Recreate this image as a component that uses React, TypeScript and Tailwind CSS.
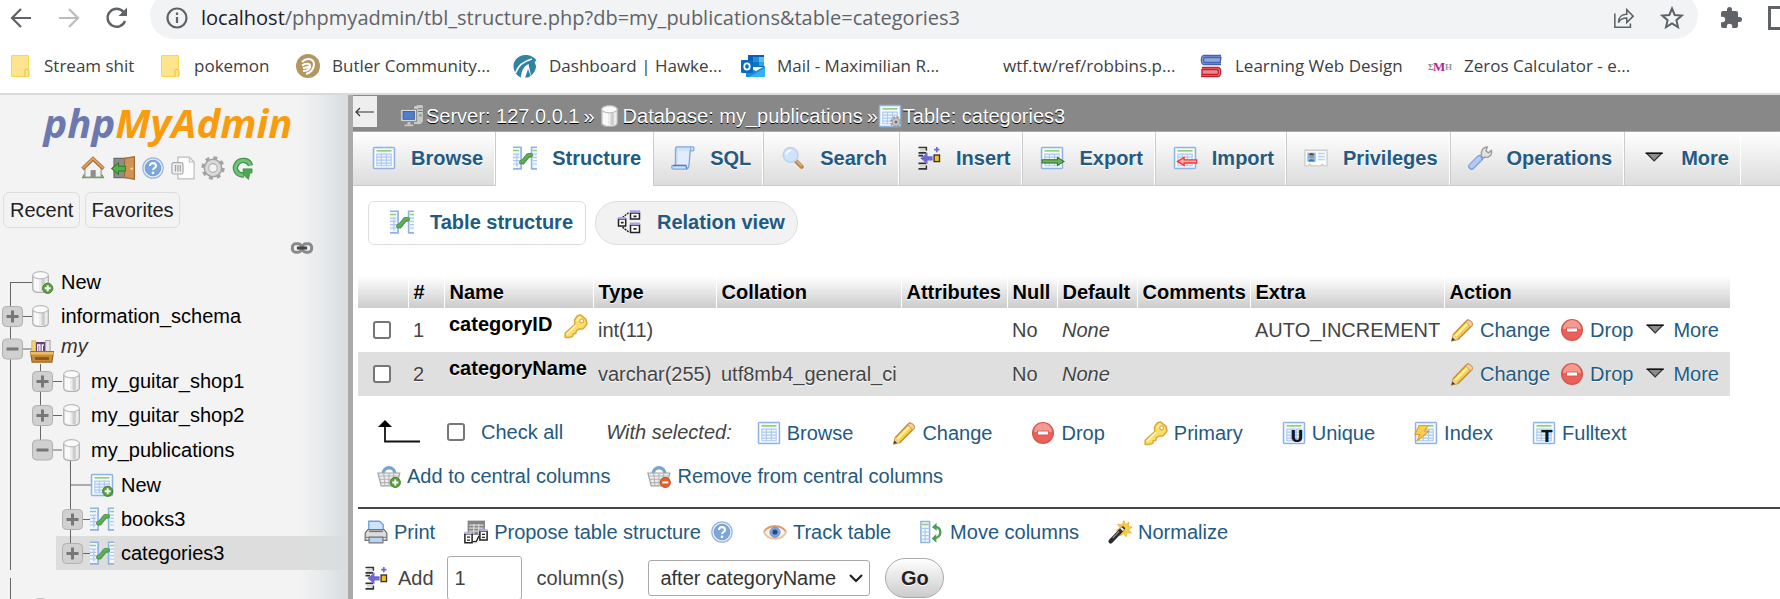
import React from "react";

type IconProps = { className?: string };

function Svg({ children, className = "" }: { children: React.ReactNode; className?: string }) {
  return (
    <svg viewBox="0 0 16 16" className={`size-6 shrink-0 overflow-visible ${className}`} fill="none" aria-hidden="true">
      {children}
    </svg>
  );
}

/* ---------- shared icon parts ---------- */

function Sheet() {
  return (
    <>
      <rect x="1" y="1" width="14" height="14" rx=".6" fill="#fff" stroke="#8fb3e2" />
      <rect x="1.7" y="1.7" width="12.6" height="12.6" stroke="#d5e5f8" strokeWidth=".5" />
      <path d="M3 3.2h10" stroke="#8fd07c" strokeWidth="1.2" />
      <rect x="3" y="5.2" width="10" height="8" fill="#f3f8ff" />
      <path d="M3 5.4h10M3 7.4h10M3 9.4h10M3 11.4h10M3 13.2h10M3.2 5v8.3M6.2 5v8.3M9.6 5v8.3M12.8 5v8.3" stroke="#a9c8ef" strokeWidth=".7" />
    </>
  );
}

function Plus({ x = 11.8, y = 12.2 }: { x?: number; y?: number }) {
  return (
    <>
      <circle cx={x} cy={y} r="3.4" fill="#5d9f3f" stroke="#417c2a" strokeWidth=".6" />
      <path d={`M${x - 2} ${y}h4M${x} ${y - 2}v4`} stroke="#fff" strokeWidth="1.3" />
    </>
  );
}

function DbShape() {
  return (
    <>
      <path d="M1.8 3.6v9c0 1.6 2.2 2.4 5.2 2.4s5.2-.8 5.2-2.4v-9z" fill="#ececec" stroke="#b0b0b0" strokeWidth=".8" />
      <path d="M3.6 6v7.4M5.2 6.2v8" stroke="#fff" strokeWidth="1.2" />
      <path d="M8.8 6v8" stroke="#cdcdcd" strokeWidth="2.2" />
      <ellipse cx="7" cy="3.5" rx="5.2" ry="2.4" fill="#fafafa" stroke="#bdbdbd" strokeWidth=".8" />
    </>
  );
}

function Basket() {
  return (
    <>
      <path d="M4 7c0-6 8-6 8 0" stroke="#79a6cc" strokeWidth="2.2" />
      <path d="M.6 6h14.6l-2 8.6H2.8z" fill="#eee" stroke="#a2a2a2" strokeWidth=".8" />
      <path d="M1.4 8h13M2 10.2h12M2.5 12.4h11M4.5 6.2l.8 8.2M8 6.2v8.2M11.2 6.2l-.8 8.2" stroke="#b3b3b3" strokeWidth=".7" />
    </>
  );
}

/* ---------- icons ---------- */

const TableIcon = (p: IconProps) => <Svg {...p}><Sheet /></Svg>;
const NewTableIcon = (p: IconProps) => <Svg {...p}><Sheet /><Plus /></Svg>;
const DbIcon = (p: IconProps) => <Svg {...p}><DbShape /></Svg>;
const NewDbIcon = (p: IconProps) => <Svg {...p}><DbShape /><Plus /></Svg>;
const OpenDbIcon = (p: IconProps) => <Svg {...p}><path d="M6.3 15v5" stroke="#666" strokeWidth=".7" /><DbShape /></Svg>;

const StructureIcon = (p: IconProps) => (
  <Svg {...p}>
    <path d="M0 .8h5.4v14.4H0M16 .8h-3.6v14.4H16" fill="#f3f8ff" stroke="#8fb3e2" strokeWidth="1.1" />
    <path d="M0 3h4M13.4 3H16" stroke="#8fd07c" strokeWidth="1.1" />
    <path d="M0 5.4h4.2M0 7.6h4.2M0 9.8h4.2M0 12h4.2M2.6 5v8.6M13.4 5.4H16M13.4 7.6H16M13.4 9.8H16M13.4 12H16" stroke="#a9c8ef" strokeWidth=".8" />
    <path d="M5.6 10.8h.8L10.200 6.200h1.600" stroke="#4c9748" strokeWidth="3.200" strokeLinecap="round" strokeLinejoin="round" />
    <path d="M5.6 10.600h.8L10.200 6h1.600" stroke="#62ad5d" strokeWidth="1.800" strokeLinecap="round" strokeLinejoin="round" />
  </Svg>
);

const ServerIcon = (p: IconProps) => (
  <Svg {...p}>
    <path d="M9 1.4 12 .4h3.6v11.4l-2 2H9z" fill="#c9c9c9" stroke="#7c7c7c" strokeWidth=".6" />
    <path d="M12 3.2h3M12 5h3" stroke="#777" strokeWidth=".7" /><circle cx="13.6" cy="7.6" r=".8" fill="#4eb83b" />
    <rect x=".5" y="3.6" width="10.6" height="8" fill="#dcdcdc" stroke="#8b8b8b" strokeWidth=".7" />
    <rect x="2" y="5" width="7.6" height="5.2" fill="#4f80cc" stroke="#2c4f93" strokeWidth=".5" />
    <path d="M5 12h2v1.6h2v1.2H3v-1.2h2z" fill="#c4c4c4" />
  </Svg>
);

const TableGearIcon = (p: IconProps) => (
  <Svg {...p}>
    <Sheet />
    <circle cx="12" cy="12" r="3" stroke="#9a9a9a" strokeWidth="1.8" strokeDasharray="1.4 .95" />
    <circle cx="12" cy="12" r="2.6" fill="#c8c8c8" stroke="#9a9a9a" strokeWidth=".5" /><circle cx="12" cy="12" r="1" fill="#707070" />
  </Svg>
);

const SqlIcon = (p: IconProps) => (
  <Svg {...p}>
    <path d="M3.6.6h11c.8 0 1.2 2.200 0 2.600h-1.800L12 13c-.2 1.600-.8 2.400-2 2.400H1.400C.2 15.400.2 13 1.400 13H3L3 2z" fill="#cfe1f8" stroke="#7fa8dc" strokeWidth=".9" />
    <path d="M4.800 3.200h7.400L11.400 12H4.400z" fill="#e0edfc" />
    <path d="M1.400 13h8.200c1 0 .6 2.200 1 2.200" stroke="#4f7fc0" strokeWidth=".9" /><path d="M12.600 3.200c1-.4.6-2.400 0-2.400" stroke="#7fa8dc" strokeWidth=".7" />
  </Svg>
);

const SearchIcon = (p: IconProps) => (
  <Svg {...p}>
    <path d="m9.6 9.6 4.2 4.2" stroke="#b98550" strokeWidth="2.8" strokeLinecap="round" />
    <path d="m10.6 10.2 3 3" stroke="#e3b780" strokeWidth="1" strokeLinecap="round" />
    <circle cx="6.4" cy="6" r="4.9" fill="#cfe4fb" stroke="#bfd4ef" strokeWidth="1.1" />
    <path d="M3.6 5.6c.2-1.6 1.4-2.6 3-2.6" stroke="#fff" strokeWidth="1.1" />
  </Svg>
);

const InsertIcon = (p: IconProps) => (
  <Svg {...p}>
    <path d="M1 1h5.2v2.2M1 4.6h5.2M1 15.2h5.2V13M1 11.6h5.2M1 6.4h3" stroke="#333" strokeWidth="1.1" />
    <path d="M2 1.8h3.6v2H2zM2 12.4h3.6v2H2z" fill="#d9d9d9" />
    <path d="M2.2 8.2 7 4.4v2.4h3.4v2.8H7V12z" fill="#6e68cf" />
    <rect x="11.4" y="6" width="3.6" height="4.4" fill="#f7c21d" stroke="#333" strokeWidth=".9" />
    <path d="M13.2.6v3.6M11.4 2.4H15" stroke="#6e68cf" strokeWidth="1.1" />
  </Svg>
);

const ExportIcon = (p: IconProps) => (
  <Svg {...p}><Sheet /><path d="M1.400 9.200h10.200V7.600L16 10.300l-4.400 2.600v-1.600H1.400z" fill="#6cb35c" stroke="#2f7429" strokeWidth=".7" /></Svg>
);
const ImportIcon = (p: IconProps) => (
  <Svg {...p}><Sheet /><path d="M15.800 9.200H7.400V7.600L3 10.300l4.400 2.600v-1.600h8.400z" fill="#ffb3b0" stroke="#ee3b3b" strokeWidth=".9" /></Svg>
);

const PrivilegesIcon = (p: IconProps) => (
  <Svg {...p}>
    <path d="M.6 2.8h14.8v10.4h-2.2l-1-1-1 1H4.8l-1-1-1 1H.6z" fill="#fbfbfb" stroke="#cdcdcd" strokeWidth=".9" />
    <rect x="2.2" y="4.4" width="5.6" height="6" fill="#83bdf3" />
    <circle cx="5" cy="6.6" r="1.6" fill="#c98a4e" /><path d="M3.200 6c.3-1.600 3.200-1.600 3.600 0z" fill="#6b3f1d" /><path d="M2.800 10.400c.2-2.200 4.200-2.200 4.400 0z" fill="#2f78c4" />
    <path d="M9.400 5h4.400M9.400 7h4.400M9.400 9h4.400" stroke="#b8d5ef" strokeWidth="1" />
  </Svg>
);

const WrenchIcon = (p: IconProps) => (
  <Svg {...p}>
    <path d="M7.4 7.4 9 5.6C8.6 3 10 .8 12.8.6L12 3.2l1.6 1.4L15.6 3c.8 3.2-2 5.2-4.6 4.4L9.2 9z" fill="#e2e2e2" stroke="#999" strokeWidth=".9" />
    <path d="m2.4 13.6 5.4-5.4" stroke="#7f9edb" strokeWidth="4.6" strokeLinecap="round" />
    <path d="m2.400 13.400 5-5" stroke="#b3caf3" strokeWidth="3" strokeLinecap="round" />
  </Svg>
);

const CaretIcon = (p: IconProps) => (
  <Svg {...p}><path d="M3.2 5h9.8L8.1 10z" fill="#8c8c8c" stroke="#333" strokeWidth=".8" /><path d="M2.4 4.8h11.4" stroke="#111" strokeWidth="1.1" /></Svg>
);

const RelationIcon = (p: IconProps) => (
  <Svg {...p}>
    <path d="M3.6 5 8 1.6M3.6 11.4 8 14.8" stroke="#222" strokeWidth=".9" strokeDasharray="1.4 .5" />
    <path d="M1 6h4.8v4.6H1zM9 2h6v4H9zM9 10h6v5H9z" fill="#fff" stroke="#222" strokeWidth="1" />
    <path d="M.8 5.4h5M8.6 1h6.8M8.6 9.2h6.8" stroke="#a9a3e2" strokeWidth="1.6" />
    <path d="M2.6 8.4h1.8M11 4.2h2M11 12.6h2" stroke="#222" strokeWidth="1.1" />
  </Svg>
);

const KeyIcon = (p: IconProps) => (
  <Svg {...p}>
    <path d="M9 1.2 11 .6l3.6 2.8.8 3.2-2.6 3.2-3.2.4-1.4 1.2-.4 1.6-1.6.2-.4 1.6-2 .8H.8v-2.8L7.2 7 7 4z" fill="#f9dd6b" stroke="#dda53a" strokeWidth="1" strokeLinejoin="round" />
    <path d="M1.8 13.6 8 7.4M8.4 4.4 11 2" stroke="#fff3b8" strokeWidth="1.1" />
    <circle cx="11.8" cy="4.6" r="1.3" fill="#fff" stroke="#dda53a" strokeWidth=".7" />
  </Svg>
);

const PencilIcon = (p: IconProps) => (
  <Svg {...p}>
    <path d="M1.200 15.200 2.200 11 11 1.800c1.400-1.400 4.600 1.600 3.600 3.200l-9.200 9.200z" fill="#f6cf54" stroke="#c38b2c" strokeWidth=".9" />
    <path d="m3.600 12 8.200-8.400" stroke="#fff2a0" strokeWidth="1.4" />
    <path d="m10.400 2.600 3.400 3.400 1-1.200c.8-1.800-2-4.200-3.400-3z" fill="#f3cda4" stroke="#c99560" strokeWidth=".6" />
    <path d="M1.200 15.200 2.200 11l3.200 3.200z" fill="#ecd0a0" /><path d="m1 15.400.6-2.400 1.800 1.600z" fill="#4b3a1b" />
  </Svg>
);

const DropIcon = (p: IconProps) => (
  <Svg {...p}>
    <circle cx="8" cy="8" r="6.9" fill="#ea6159" stroke="#d5554e" strokeWidth=".9" />
    <path d="M2 7.400a6 6 0 0 1 12 0z" fill="#f39a92" />
    <rect x="4.400" y="6.700" width="7.200" height="2.600" fill="#fff" stroke="#d64b44" strokeWidth=".5" />
  </Svg>
);

const LetterIcon = ({ letter }: { letter: string }) => (
  <Svg>
    <Sheet />
    <text x="10" y="14" textAnchor="middle" fontFamily="DejaVu Sans" fontWeight="700" fontSize="11" fill="#14141c">{letter}</text>
  </Svg>
);

const IndexIcon = (p: IconProps) => (
  <Svg {...p}><Sheet /><path d="M3.400 3h6L7 6.600h3L1.800 13.600 4 9H.6z" fill="#f9cf52" stroke="#dd9f2c" strokeWidth=".7" /></Svg>
);

const AddBasketIcon = () => <Svg><Basket /><Plus x={12.2} y={12.3} /></Svg>;
const RemoveBasketIcon = () => (
  <Svg><Basket /><circle cx="12.2" cy="12.3" r="3.4" fill="#e2622a" stroke="#bd4715" strokeWidth=".6" /><path d="M10.2 12.3h4" stroke="#fff" strokeWidth="1.3" /></Svg>
);

const PrintIcon = () => (
  <Svg>
    <path d="M3.2 7V.8h7L12.8 3v4z" fill="#cfe4fb" stroke="#6f9fd8" strokeWidth=".9" />
    <path d="M.8 8.6 2.6 6.4h10.8l1.8 2.2v5H.8z" fill="#dcdcdc" stroke="#777" strokeWidth=".9" />
    <path d="M3.4 7.6h9.2" stroke="#777" /><path d="M1 11.600h14" stroke="#888" strokeWidth=".8" />
    <path d="M3.400 11.400h9.200v3.800H3.400z" fill="#b9d5f4" stroke="#777" strokeWidth=".8" />
  </Svg>
);

const ProposeIcon = () => (
  <Svg>
    <rect x="2.4" y=".4" width="11.6" height="9.6" fill="#858585" /><path d="M3.4 3.4h9.6M3.4 5.4h9.6M3.4 7.4h9.6M6.6 2.6v7M9.8 2.6v7" stroke="#d8d8d8" strokeWidth=".8" />
    <path d="M.6 9.200h4.800v6H.6zM10.600 7.400h4.800v6h-4.800z" fill="#fff" stroke="#222" strokeWidth="1" />
    <path d="M.2 8.600h5.600M10.200 6.800h5.600" stroke="#b5b1e6" strokeWidth="1.4" />
    <path d="M5.800 14.400h2.400l1.800-3.800M2 11.400h2M2 13.400h2M12 9.600h2M12 11.600h2" stroke="#222" strokeWidth=".9" />
  </Svg>
);

const HelpIcon = (p: IconProps) => (
  <Svg {...p}>
    <circle cx="8" cy="8" r="6.8" fill="#e4eefa" stroke="#9ab7da" strokeWidth=".8" />
    <circle cx="8" cy="8" r="5.2" fill="#7ea7d9" stroke="#6690c8" strokeWidth=".5" />
    <path d="M6 6.600c0-2.600 4-2.400 4 0 0 1.400-2 1.400-2 2.800" stroke="#fff" strokeWidth="1.4" /><circle cx="8" cy="11.200" r=".9" fill="#fff" />
  </Svg>
);

const EyeIcon = () => (
  <Svg>
    <path d="M.6 8C3 3.2 13 3.2 15.4 8 13 14 3 14 .6 8z" fill="#fdf1e6" stroke="#edc0a0" strokeWidth="1.3" />
    <path d="M1 7.400C4 3 12 3 15 7.400" stroke="#d89c72" strokeWidth="1.1" />
    <circle cx="8" cy="8.200" r="3.400" fill="#7ba4dc" stroke="#6b93cf" strokeWidth=".6" /><circle cx="8" cy="8" r="1.700" fill="#2b4684" />
  </Svg>
);

const MoveIcon = () => (
  <Svg>
    <path d="M.6 1h5.8v14H.6z" fill="#f3f8ff" stroke="#8fb3e2" /><path d="M1.4 3h4.4" stroke="#8fd07c" strokeWidth="1.1" />
    <path d="M1.2 5.6h5M1.2 8h5M1.2 10.4h5M1.2 12.8h5M3.4 5v9.4" stroke="#a9c8ef" strokeWidth=".8" />
    <path d="M9.600 4.600c5-.6 5.600 7-.2 7.600" stroke="#4a9d55" strokeWidth="1.600" /><path d="M11 1.800 8 4.800l3.200 2.400zM10.800 9.400l-3 3 3.200 2.800z" fill="#4a9d55" />
  </Svg>
);

const WandIcon = () => (
  <Svg>
    <path d="m10.6.4 1 2.8L14 1.400l-.6 3 2.600.4-2.200 1.600 1.800 2.400-3-.4-.6 2.800-1.600-2.200-2.600 1.600.6-3-2.800-.8 2.600-1.400L6.400 2.800l3 .6z" fill="#f8cd45" stroke="#eaab24" strokeWidth=".5" />
    <path d="m1.800 14.200 8-8.400" stroke="#2b2b2b" strokeWidth="3" strokeLinecap="round" /><path d="m3.200 12 4.200-4.400" stroke="#8f8f8f" strokeWidth=".8" /><path d="m9 6.600 1-1" stroke="#eee" strokeWidth="2.600" />
  </Svg>
);

const HomeIcon = () => (
  <Svg>
    <path d="M.4 14.800h15.200l-1.400-2.600H1.800z" fill="#5ba645" />
    <path d="M2.600 8 8 3l5.400 5v6H2.600z" fill="#f2f2f2" stroke="#9a9a9a" strokeWidth=".8" /><path d="M6.400 14V9.400h3.400V14z" fill="#8e8e8e" />
    <path d="M1 8.600 8 1.800l7 6.800" stroke="#b1733a" strokeWidth="2.400" /><path d="M1.200 8.200 8 1.600l6.800 6.600" stroke="#e2aa6c" strokeWidth=".9" />
  </Svg>
);
const ExitIcon = () => (
  <Svg>
    <path d="M2 1.600h9v12.800H2z" fill="#8d8d8d" stroke="#6c6c6c" strokeWidth=".8" /><path d="M9 1.600 15.600.4v15.200L9 14.400z" fill="#cf9356" stroke="#a06a35" strokeWidth=".8" />
    <circle cx="13.800" cy="8.400" r=".8" fill="#f9e18a" /><path d="M.4 8.400 5 4.600v2.200h4.600V10H5v2.200z" fill="#55b04a" stroke="#2f7d2a" strokeWidth=".7" />
  </Svg>
);
const DocsIcon = () => (
  <Svg>
    <path d="M4.600.8h7.600L15.400 4v11.200H4.600z" fill="#fdfdfd" stroke="#bdbdbd" strokeWidth=".8" /><path d="M12.200.8V4h3.200" stroke="#bdbdbd" strokeWidth=".7" />
    <rect x=".6" y="4.400" width="7.400" height="7.600" rx="1.200" fill="#eee" stroke="#aaa" strokeWidth=".8" /><path d="M3 6v4.400M4.600 6v4.400M6.200 6v4.400" stroke="#a2a2a2" strokeWidth=".8" />
  </Svg>
);
const GearIcon = () => (
  <Svg>
    <circle cx="8" cy="8" r="6.6" stroke="#a3a3a3" strokeWidth="2.400" strokeDasharray="2.6 2.584" />
    <circle cx="8" cy="8" r="4.400" stroke="#a3a3a3" strokeWidth="3.800" /><circle cx="8" cy="8" r="4.200" stroke="#d9d9d9" strokeWidth="2.200" />
  </Svg>
);
const ReloadGreenIcon = () => (
  <Svg>
    <path d="M13 6.400C12 2.600 6.600 1.600 4 5c-2.600 3.600 0 8 4.600 7.600" stroke="#3f9149" strokeWidth="3.600" />
    <path d="M13 6.400C12 2.600 6.600 1.600 4 5c-2.600 3.600 0 8 4.600 7.600" stroke="#6fc276" strokeWidth="2" />
    <path d="M8 8.600h6v2.600l-1.400.2-1 4.200-3.200-3z" fill="#4da756" stroke="#3f9149" strokeWidth=".6" />
  </Svg>
);
const LinkIcon = () => (
  <Svg>
    <rect x="1.600" y="5.200" width="6" height="5.600" rx="2.200" stroke="#8a8a8a" strokeWidth="2" />
    <rect x="8.400" y="5.200" width="6" height="5.600" rx="2.200" stroke="#8a8a8a" strokeWidth="2" />
    <path d="M4.600 8h6.800" stroke="#444" strokeWidth="2" />
  </Svg>
);
const GroupIcon = () => (
  <Svg>
    <path d="M1.200 1.200h2.600v8H1.200z" fill="#f2d66b" stroke="#cda83a" strokeWidth=".5" /><path d="M4 2h6v7H4z" fill="#6b3f7c" /><path d="M5.200 8V4h1.400v4M8.200 8V4h1" stroke="#fff" strokeWidth=".9" />
    <path d="M10.400 1h3v8.400h-3z" fill="#e6e6e6" stroke="#999" strokeWidth=".6" />
    <path d="M.4 8.400h15.200l-1 7H1.400z" fill="#c98c36" stroke="#9c661f" strokeWidth=".8" /><path d="M.4 8.600h15.200v1.800H.4z" fill="#eebb6a" /><path d="M3.400 12h9.200v2H3.400z" fill="#8a5a1b" />
  </Svg>
);

/* ---------- browser chrome ---------- */

const icon22 = "size-[22px] shrink-0";

function FolderIcon() {
  return (
    <svg viewBox="0 0 24 24" className="size-6 shrink-0" aria-hidden="true">
      <rect x="3.5" y="1.5" width="17" height="21" rx=".5" fill="#ffe48f" stroke="#fbd74e" />
      <path d="M17 22.5v-6c0-1.6 4-1.6 4 0v4.6c0 .8-.6 1.4-1.4 1.4" fill="#ffe48f" stroke="#eebf2e" />
    </svg>
  );
}

const bookmarks: { label: string; width: string; icon: React.ReactNode }[] = [
  { label: "Stream shit", width: "w-[150px]", icon: <FolderIcon /> },
  { label: "pokemon", width: "w-[138px]", icon: <FolderIcon /> },
  {
    label: "Butler Community...", width: "w-[217px]",
    icon: <svg viewBox="0 0 24 24" className="size-6 shrink-0" fill="none" aria-hidden="true"><circle cx="12" cy="12" r="12" fill="#b39660" /><path d="M6 8c5-5 12-3 12 2.500 0 5-4 8.500-8 9.500M6 11.500c4-3 9-2 8 1.500s-4 4-7 4M7 14c3 0 4-.5 6-1.500" stroke="#fff" strokeWidth="2" /></svg>,
  },
  {
    label: "Dashboard | Hawke...", width: "w-[228px]",
    icon: <svg viewBox="0 0 24 24" className="size-6 shrink-0" fill="none" aria-hidden="true"><path d="M.5 13C0 6 6 1 12 1c5 0 9.500 2 11.500 5.500L21.500 8 23 12c0 5-4 10-8 11.500H8C4 22 1 18 .5 13z" fill="#2f83a3" /><path d="M2.500 19C5 12 11 7 19 5" stroke="#fff" strokeWidth="1.600" /><path d="M8 24c0-7 3-12 7.500-14l3 14-3.500-9-3 9z" fill="#fff" /></svg>,
  },
  {
    label: "Mail - Maximilian R...", width: "w-[226px]",
    icon: <svg viewBox="0 0 24 24" className="size-6 shrink-0" aria-hidden="true"><path d="M7 1h16v12H7z" fill="#0f5fb0" /><path d="M12 3h6v5h-6z" fill="#1f8fdd" /><path d="M18 3h5v5h-5z" fill="#4cc3f4" /><path d="M12 8h6v5h-6z" fill="#1371c6" /><path d="M18 8h5v4h-5z" fill="#2ba4e8" /><path d="m5 12 10 5 9-5v11H5z" fill="#1a8be0" /><path d="m8 23 16-9v9z" fill="#35b1f0" /><rect y="6" width="12" height="13" rx="1" fill="#0b6ac0" /><ellipse cx="6" cy="12.500" rx="2.700" ry="3.200" fill="none" stroke="#fff" strokeWidth="1.800" /></svg>,
  },
  { label: "wtf.tw/ref/robbins.p...", width: "w-[232px]", icon: <span className="size-6 shrink-0" /> },
  {
    label: "Learning Web Design", width: "w-[229px]",
    icon: <svg viewBox="0 0 24 24" className="size-6 shrink-0" fill="none" aria-hidden="true"><path d="M22 1.500H5c-3.500 0-3.500 9 0 9h17M22 3.500H6c-2 0-2 5 0 5h15z" fill="#8fa8dc" stroke="#4463b5" strokeWidth="1.300" /><path d="M3 13.500h16c3.500 0 3.500 9 0 9H2M3 15.500h15c2 0 2 5 0 5H3z" fill="#f0868f" stroke="#c7202f" strokeWidth="1.300" /></svg>,
  },
  {
    label: "Zeros Calculator - e...", width: "w-[220px]",
    icon: <svg viewBox="0 0 24 24" className="size-6 shrink-0" fontFamily="Liberation Serif" fontWeight="700" aria-hidden="true"><text x="0" y="16" fontSize="9" fill="#888">Σ</text><text x="5" y="17" fontSize="13" fill="#b0259b">M</text><text x="17" y="16" fontSize="9" fill="#999">H</text></svg>,
  },
];

function BrowserChrome() {
  const nav = "flex size-6 items-center justify-center";
  return (
    <header className="shrink-0 border-b-2 border-[#dadada] bg-white font-['Open_Sans','Noto_Sans',sans-serif]">
      <div className="flex h-[39px] items-start overflow-hidden">
        <div className="flex h-9 items-center gap-6 pr-[21px] pl-[9px]">
          <button className={nav} aria-label="Back"><svg viewBox="0 0 24 24" className="size-6" fill="none" stroke="#5f6368" strokeWidth="2.2"><path d="M22 12H3M12 3l-9 9 9 9" /></svg></button>
          <button className={nav} aria-label="Forward"><svg viewBox="0 0 24 24" className="size-6" fill="none" stroke="#babcbe" strokeWidth="2.2"><path d="M2 12h19M12 3l9 9-9 9" /></svg></button>
          <button className={nav} aria-label="Reload"><svg viewBox="0 0 24 24" className="size-6" fill="none"><path d="M20 15a9 9 0 1 1-1.500-9" stroke="#5f6368" strokeWidth="2.400" /><path d="M22 1.500V10h-8.500z" fill="#5f6368" /></svg></button>
        </div>
        <div className="-mt-2 flex h-[47px] flex-1 items-center rounded-full bg-[#f1f3f4] pt-1 pr-[14px] pl-[15px]">
          <svg viewBox="0 0 24 24" className="size-6 shrink-0" fill="none" stroke="#5f6368" strokeWidth="2.2" aria-hidden="true"><circle cx="12" cy="12" r="9.500" /><path d="M12 11v6M12 6.500V9" /></svg>
          <div className="min-w-0 flex-1 truncate pl-3 text-[20px] leading-7 text-[#5f6368]">
            <span className="text-[#202124]">localhost</span>/phpmyadmin/tbl_structure.php?db=my_publications&amp;table=categories3
          </div>
          <button className={nav} aria-label="Share"><svg viewBox="0 0 24 24" className={icon22} fill="none" stroke="#5f6368" strokeWidth="1.700"><path d="M2 7v15h17v-4M6 17c0-6 4-9 9-9V3l7 7-7 7v-5c-4 0-7 1-9 5z" /></svg></button>
          <button className={`${nav} ml-6`} aria-label="Bookmark this tab"><svg viewBox="0 0 24 24" className="size-6" fill="none" stroke="#5f6368" strokeWidth="2"><path d="m12 2.500 2.700 6.500 7 .6-5.300 4.600 1.600 6.900-6-3.700-6 3.700 1.600-6.900L2.300 9.600l7-.6z" /></svg></button>
        </div>
        <div className="flex h-9 w-[82px] shrink-0 items-center justify-between overflow-hidden pl-[21px]">
          <button className={nav} aria-label="Extensions"><svg viewBox="0 0 24 24" className="size-6" fill="#5f6368"><path d="M20.500 11H19V7a2 2 0 0 0-2-2h-4V3.500a2.500 2.500 0 0 0-5 0V5H4a2 2 0 0 0-2 2v3.800h1.500a2.700 2.700 0 0 1 0 5.400H2V20a2 2 0 0 0 2 2h3.800v-1.500a2.700 2.700 0 0 1 5.400 0V22H17a2 2 0 0 0 2-2v-4h1.500a2.500 2.500 0 0 0 0-5z" /></svg></button>
          <button className="h-6 w-[12px] shrink-0" aria-label="Side panel"><svg viewBox="0 0 12 24" className="h-6 w-3" fill="none" stroke="#5f6368" strokeWidth="3"><path d="M12 1.500H1.500v21H12" /></svg></button>
        </div>
      </div>
      <nav className="flex h-[54px] items-center overflow-hidden pl-2 text-[17px] text-[#3c4043]" aria-label="Bookmarks">
        {bookmarks.map((b) => (
          <a key={b.label} href="#" className={`flex shrink-0 items-center gap-3 whitespace-nowrap ${b.width}`}>
            {b.icon}
            {b.label}
          </a>
        ))}
      </nav>
    </header>
  );
}

/* ---------- navigation tree ---------- */

type Cell = "line" | "plus" | "minus" | "first" | "elbow" | "last" | "lastMinus";

function Guide({ kind }: { kind: Cell }) {
  const isLast = kind === "last" || kind === "lastMinus";
  const isMinus = kind === "minus" || kind === "lastMinus";
  const box = kind === "plus" || isMinus || isLast;
  return (
    <svg className="h-full w-[30px] shrink-0 overflow-visible" aria-hidden="true">
      <line x1="10.5" x2="10.5" y1={kind === "first" ? "50%" : "0"} y2={isLast ? "50%" : "100%"} stroke="#666" />
      {kind !== "line" && <rect x="10" y="50%" width="22" height="1" fill="#666" />}
      {box && (
        <svg x="2" y="50%" width="21" height="21" overflow="visible">
          <g transform="translate(0 -10)">
            <rect x=".5" y=".5" width="20" height="20" rx="4" fill="#d0d0d0" stroke="#b0b0b0" />
            <path d={isMinus ? "M4.500 10.500h12" : "M4.500 10.500h12M10.500 4.500v12"} stroke="#777" strokeWidth="3" />
          </g>
        </svg>
      )}
    </svg>
  );
}

function TreeRow({ cell, icon, label }: { cell: Cell; icon: React.ReactNode; label?: string }) {
  return (
    <>
      <Guide kind={cell} />
      <a href="#" className="flex items-center">
        <span className="flex w-[31px] shrink-0">{icon}</span>
        {label}
      </a>
    </>
  );
}

function Sidebar() {
  return (
    <aside className="flex w-[353px] shrink-0 flex-col overflow-hidden border-r-[5px] border-[#aaa] bg-[linear-gradient(to_right,#f3f3f3_0,#f3f3f3_300px,#d9dde0_348px)] text-black *:shrink-0">
      <a href="#" className="flex h-[57px] items-start justify-center pr-3 font-['Open_Sans',sans-serif] text-[40px] leading-[55px] font-bold italic">
        <span className="text-[#6c78af]">php</span><span className="text-[#f89c0e]">MyAdmin</span>
      </a>
      <div className="flex h-8 items-center justify-center gap-[6px] pr-3">
        <HomeIcon /><ExitIcon /><HelpIcon /><DocsIcon /><GearIcon /><ReloadGreenIcon />
      </div>
      <div className="mt-2 flex gap-[5px] pl-[3px] text-[#222]">
        <button className="h-9 rounded-md border border-[#ddd] px-[6px]">Recent</button>
        <button className="h-9 rounded-md border border-[#ddd] px-[5px]">Favorites</button>
      </div>
      <div className="mt-2 flex h-6 justify-end pr-[34px]"><LinkIcon /></div>
      <ul className="mt-[5px] leading-none whitespace-nowrap">
        <li className="flex h-[34px]"><TreeRow cell="first" icon={<NewDbIcon />} label="New" /></li>
        <li className="flex h-[34px]"><TreeRow cell="plus" icon={<DbIcon />} label="information_schema" /></li>
        <li className="flex h-[31px]">
          <Guide kind="minus" />
          <a href="#" className="flex text-[#333] italic">
            <span className="flex w-[31px] shrink-0 items-center pt-1"><GroupIcon /></span>
            <span className="pt-[3px]">my</span>
          </a>
        </li>
        <li className="flex h-[34px]"><Guide kind="line" /><TreeRow cell="plus" icon={<DbIcon className="ml-px" />} label="my_guitar_shop1" /></li>
        <li className="flex h-[34px]"><Guide kind="line" /><TreeRow cell="plus" icon={<DbIcon className="ml-px" />} label="my_guitar_shop2" /></li>
        <li className="flex h-[35px]"><Guide kind="line" /><TreeRow cell="lastMinus" icon={<OpenDbIcon className="ml-px" />} label="my_publications" /></li>
        <li className="flex h-[35px]"><Guide kind="line" /><span className="w-[30px] shrink-0" /><TreeRow cell="elbow" icon={<NewTableIcon />} label="New" /></li>
        <li className="flex h-[34px]"><Guide kind="line" /><span className="w-[30px] shrink-0" /><TreeRow cell="plus" icon={<StructureIcon />} label="books3" /></li>
        <li className="flex h-[34px]">
          <Guide kind="line" />
          <span className="w-[26px] shrink-0" />
          <div className="flex flex-1 bg-[linear-gradient(to_right,#ddd_250px,#d9dde0)] pl-1"><TreeRow cell="last" icon={<StructureIcon />} label="categories3" /></div>
        </li>
        <li className="mt-2 flex h-[62px]"><TreeRow cell="plus" icon={<DbIcon />} /></li>
      </ul>
    </aside>
  );
}

/* ---------- main panel ---------- */

const tabs = [
  { label: "Browse", icon: <TableIcon /> },
  { label: "Structure", icon: <StructureIcon />, active: true },
  { label: "SQL", icon: <SqlIcon /> },
  { label: "Search", icon: <SearchIcon /> },
  { label: "Insert", icon: <InsertIcon /> },
  { label: "Export", icon: <ExportIcon /> },
  { label: "Import", icon: <ImportIcon /> },
  { label: "Privileges", icon: <PrivilegesIcon /> },
  { label: "Operations", icon: <WrenchIcon /> },
  { label: "More", icon: <CaretIcon /> },
];

const columns = [
  { label: "", width: "w-[50px]" },
  { label: "#", width: "w-[36px]" },
  { label: "Name", width: "w-[149px]" },
  { label: "Type", width: "w-[123px]" },
  { label: "Collation", width: "w-[185px]" },
  { label: "Attributes", width: "w-[106px]" },
  { label: "Null", width: "w-[50px]" },
  { label: "Default", width: "w-[80px]" },
  { label: "Comments", width: "w-[113px]" },
  { label: "Extra", width: "w-[194px]" },
  { label: "Action", width: "w-[286px]" },
];

const rows = [
  { name: "categoryID", key: true, type: "int(11)", collation: "", extra: "AUTO_INCREMENT" },
  { name: "categoryName", key: false, type: "varchar(255)", collation: "utf8mb4_general_ci", extra: "" },
];

function Action({ icon, label }: { icon: React.ReactNode; label: string }) {
  return (
    <a href="#" className="flex items-center gap-[6px] whitespace-nowrap text-[#235a81]">
      {icon}
      {label}
    </a>
  );
}

const checkbox = "size-[18px] shrink-0 appearance-none rounded-[3px] border-2 border-[#767676] bg-white";

function ColumnsTable() {
  return (
    <table className="mt-[31px] w-[1372px] table-fixed border-collapse text-left">
      <thead>
        <tr>
          {columns.map((c, i) => (
            <th key={i} className={`h-8 border-r border-white bg-linear-to-b from-white to-[#ccc] p-0 pl-[5px] font-bold whitespace-nowrap text-black text-shadow-[0_1px_0_#fff] ${c.width}`}>
              {c.label}
            </th>
          ))}
        </tr>
      </thead>
      <tbody className="text-[#444] text-shadow-[0_1px_0_#fff]">
        {rows.map((r, i) => (
          <tr key={r.name} className="h-11 whitespace-nowrap even:bg-[#dfdfdf] [&>td]:p-0 [&>td]:pl-[5px]">
            <td><span className="flex justify-center pr-2"><input type="checkbox" id={r.name} className={checkbox} /></span></td>
            <td>{i + 1}</td>
            <td className="align-top">
              <div className="flex justify-between pt-[3px] pr-[5px]">
                <label htmlFor={r.name} className="font-bold text-black">{r.name}</label>
                {r.key && <KeyIcon className="mt-[3px]" />}
              </div>
            </td>
            <td>{r.type}</td>
            <td>{r.collation}</td>
            <td />
            <td>No</td>
            <td><i>None</i></td>
            <td />
            <td>{r.extra}</td>
            <td>
              <div className="flex gap-[10px] pl-px">
                <Action icon={<PencilIcon />} label="Change" />
                <Action icon={<DropIcon />} label="Drop" />
                <Action icon={<CaretIcon />} label="More" />
              </div>
            </td>
          </tr>
        ))}
      </tbody>
    </table>
  );
}

function Main() {
  return (
    <main className="flex min-w-0 flex-1 flex-col overflow-hidden bg-white text-[#444]">
      <div className="flex h-9 shrink-0 items-start bg-[#888] text-white text-shadow-[0_1px_0_#000]">
        <button className="mt-px flex h-[31px] w-6 items-center justify-center bg-[#eee]" aria-label="Hide navigation panel">
          <svg viewBox="0 0 20 10" className="h-[10px] w-5" fill="none" stroke="#333" strokeWidth="1.200"><path d="M19 5H1M5 1 1 5l4 4" /></svg>
        </button>
        <nav className="flex h-[41px] items-center whitespace-nowrap" aria-label="Breadcrumb">
          <ServerIcon className="ml-[23px]" /><a href="#" className="ml-[2px]">Server: 127.0.0.1</a><span className="ml-1">»</span>
          <DbIcon className="ml-1" /><a href="#">Database: my_publications</a><span className="ml-1">»</span>
          <TableGearIcon /><a href="#" className="ml-px">Table: categories3</a>
        </nav>
      </div>
      <nav className="flex h-[55px] shrink-0 border-t border-b border-t-[#aaa] border-b-[#ccc] bg-linear-to-b from-white to-[#dcdcdc] font-bold text-[#235a81] text-shadow-[0_1px_0_#fff]" aria-label="Table pages">
        {tabs.map((t) => (
          <a
            key={t.label}
            href="#"
            className={`flex shrink-0 items-center gap-[15px] border-r border-l border-r-white border-l-[#ccc] pr-[11px] pb-[2px] pl-[17px] first:border-l-0 first:pl-[19px] ${t.active ? "-mb-px bg-white" : ""}`}
          >
            {t.icon}
            {t.label}
          </a>
        ))}
      </nav>
      <div className="mt-[15px] flex gap-[9px] pl-[15px] font-bold text-[#235a81]">
        <a href="#" className="flex h-11 items-center gap-4 rounded-md border border-[#ddd] pr-3 pb-[2px] pl-[21px]"><StructureIcon />Table structure</a>
        <a href="#" className="flex h-11 items-center gap-4 rounded-full border border-[#ddd] bg-[#f2f2f2] pr-3 pb-[2px] pl-[21px]"><RelationIcon />Relation view</a>
      </div>
      <div className="pl-[5px]">
        <ColumnsTable />
        <div className="mt-[22px] flex h-7 items-center pl-[19px]">
          <svg viewBox="0 0 44 24" className="h-6 w-11 shrink-0" fill="none" aria-hidden="true"><path d="M8 6v15.500h35" stroke="#111" strokeWidth="1.800" /><path d="M8 0l7 7H1z" fill="#000" /></svg>
          <label className="ml-[26px] flex items-center gap-4 whitespace-nowrap text-[#235a81]"><input type="checkbox" className={checkbox} />Check all</label>
          <i className="ml-[43px] whitespace-nowrap">With selected:</i>
          <div className="ml-[25px] flex gap-[39px] pt-[2px]">
            <Action icon={<TableIcon />} label="Browse" />
            <Action icon={<PencilIcon />} label="Change" />
            <Action icon={<DropIcon />} label="Drop" />
            <Action icon={<KeyIcon />} label="Primary" />
            <Action icon={<LetterIcon letter="U" />} label="Unique" />
            <Action icon={<IndexIcon />} label="Index" />
            <Action icon={<LetterIcon letter="T" />} label="Fulltext" />
          </div>
        </div>
        <div className="mt-4 flex h-7 items-center gap-[37px] pl-[19px]">
          <Action icon={<AddBasketIcon />} label="Add to central columns" />
          <Action icon={<RemoveBasketIcon />} label="Remove from central columns" />
        </div>
        <hr className="mt-[17px] border-t-2 border-[#444]" />
        <div className="mt-[9px] flex h-7 items-center gap-[29px] pl-[6px]">
          <Action icon={<PrintIcon />} label="Print" />
          <div className="flex items-center gap-[9px]"><Action icon={<ProposeIcon />} label="Propose table structure" /><HelpIcon /></div>
          <Action icon={<EyeIcon />} label="Track table" />
          <Action icon={<MoveIcon />} label="Move columns" />
          <Action icon={<WandIcon />} label="Normalize" />
        </div>
        <form className="mt-[10px] flex h-11 items-center pl-[6px]" onSubmit={(e) => e.preventDefault()}>
          <InsertIcon />
          <label htmlFor="count" className="ml-[10px]">Add</label>
          <input id="count" defaultValue="1" className="ml-[13px] h-11 w-[75px] rounded-[3px] border border-[#aaa] bg-white px-[7px]" />
          <label htmlFor="position" className="ml-[15px]">column(s)</label>
          <div className="relative ml-[24px] flex items-center">
            <select id="position" className="h-9 w-[222px] appearance-none rounded-[3px] border border-[#aaa] bg-white pl-[11px] text-[#333]">
              <option>after categoryName</option>
            </select>
            <svg viewBox="0 0 14 9" className="pointer-events-none absolute right-[7px] h-[9px] w-[14px]" fill="none" stroke="#222" strokeWidth="2.200" aria-hidden="true"><path d="m1 1 6 6 6-6" /></svg>
          </div>
          <button className="ml-[15px] h-10 w-[59px] rounded-full border border-[#aaa] bg-linear-to-b from-white to-[#ccc] font-bold text-[#222] text-shadow-[0_1px_0_#fff]">Go</button>
        </form>
      </div>
    </main>
  );
}

export default function App() {
  return (
    <div className="flex h-screen flex-col overflow-hidden font-['Liberation_Sans',Arial,sans-serif] text-[20px] leading-[26px]">
      <BrowserChrome />
      <div className="flex min-h-0 flex-1">
        <Sidebar />
        <Main />
      </div>
    </div>
  );
}
